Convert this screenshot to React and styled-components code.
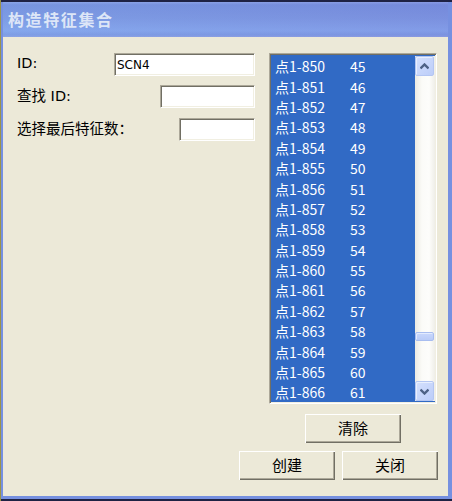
import React from "react";
import styled, { createGlobalStyle } from "styled-components";

const Global = createGlobalStyle`
  html, body { margin: 0; padding: 0; background: #23274a; }
  * { box-sizing: border-box; }
`;

const CJK = `"Noto Sans CJK SC", "Noto Sans", sans-serif`;

const rows = Array.from({ length: 17 }, (_, i) => ({
  name: `点1-${850 + i}`,
  value: 45 + i,
}));

export default function App() {
  return (
    <>
      <Global />
      <Frame>
        <Window>
          <TitleBar>构造特征集合</TitleBar>
          <Body>
            <TopArea>
              <Form>
                <FieldRow>
                  <Label>ID:</Label>
                  <Input $w={141} defaultValue="SCN4" />
                </FieldRow>
                <FieldRow $mt={9}>
                  <Label>查找 ID:</Label>
                  <Input $w={95} />
                </FieldRow>
                <FieldRow $mt={10}>
                  <Label>选择最后特征数：</Label>
                  <Input $w={76} />
                </FieldRow>
              </Form>
              <ListColumn>
                <ListBox>
                  <Items>
                    {rows.map((r) => (
                      <Item key={r.name}>
                        <Cell>{r.name}</Cell>
                        <Cell>{r.value}</Cell>
                      </Item>
                    ))}
                  </Items>
                  <ScrollBar>
                    <ScrollButton aria-label="up">
                      <svg width="9" height="7" viewBox="0 0 9 7">
                        <path d="M0.5 5.5 L4.5 1.5 L8.5 5.5" fill="none" stroke="#4d6185" strokeWidth="2.4" />
                      </svg>
                    </ScrollButton>
                    <Track>
                      <Thumb />
                    </Track>
                    <ScrollButton aria-label="down">
                      <svg width="9" height="7" viewBox="0 0 9 7">
                        <path d="M0.5 1.5 L4.5 5.5 L8.5 1.5" fill="none" stroke="#4d6185" strokeWidth="2.4" />
                      </svg>
                    </ScrollButton>
                  </ScrollBar>
                </ListBox>
                <ClearRow>
                  <Button>清除</Button>
                </ClearRow>
              </ListColumn>
            </TopArea>
            <ActionRow>
              <Button>创建</Button>
              <Button>关闭</Button>
            </ActionRow>
          </Body>
        </Window>
      </Frame>
    </>
  );
}

const Frame = styled.div`
  width: 452px;
  height: 501px;
  display: flex;
  padding: 2px 0 2px 0;
  border-left: 1px solid #9a944a;
  background: #1e2244;
`;

const Window = styled.div`
  flex: 1;
  display: flex;
  flex-direction: column;
  border-style: solid;
  border-color: #7690e0;
  border-width: 0 4px 3px 2px;
`;

const TitleBar = styled.div`
  height: 35px;
  padding: 0 0 2px 5px;
  display: flex;
  align-items: center;
  font-family: ${CJK};
  font-weight: 700;
  font-size: 16px;
  letter-spacing: 1.6px;
  color: #dde6f7;
  background:
    linear-gradient(90deg, rgba(130, 165, 235, 0.25), rgba(120, 120, 215, 0.25)),
    linear-gradient(180deg, #8ea6e6 0%, #7490dc 8%, #7b98e1 45%, #86a8ed 82%, #7c9be3 94%, #90a4e2 100%);
`;

const Body = styled.div`
  flex: 1;
  background: #ece9d8;
  padding: 16px 10px 0 14px;
  display: flex;
  flex-direction: column;
`;

const TopArea = styled.div`
  display: flex;
  gap: 14px;
`;

const Form = styled.div`
  width: 238px;
  display: flex;
  flex-direction: column;
`;

const FieldRow = styled.div`
  display: flex;
  align-items: center;
  justify-content: space-between;
  height: 23px;
  margin-top: ${(p) => p.$mt || 0}px;
`;

const Label = styled.span`
  font-family: "DejaVu Sans", "Noto Sans CJK SC", sans-serif;
  font-size: 14.5px;
  color: #000;
  padding-bottom: 4px;
`;

const Input = styled.input`
  width: ${(p) => p.$w}px;
  height: 23px;
  border-style: solid;
  border-width: 1px;
  border-color: #aca899 #fff #fff #aca899;
  box-shadow: inset 1px 1px #716f64, inset -1px -1px #f1efe2;
  background: #fff;
  padding: 1px 2px 0;
  font-family: "DejaVu Sans", sans-serif;
  font-size: 12px;
  color: #000;
  outline: none;
`;

const ListColumn = styled.div`
  width: 168px;
  display: flex;
  flex-direction: column;
`;

const ListBox = styled.div`
  height: 351px;
  display: flex;
  border-style: solid;
  border-width: 1px;
  border-color: #aca899 #fff #fff #aca899;
  box-shadow: inset 1px 1px #716f64, inset -1px -1px #f1efe2;
  padding: 2px;
  background: #316ac5;
`;

const Items = styled.div`
  flex: 1;
  overflow: hidden;
  padding-left: 3px;
`;

const Item = styled.div`
  height: 20.4px;
  display: grid;
  grid-template-columns: 75px 1fr;
  align-items: center;
  font-family: ${CJK};
  font-size: 14px;
  color: #fff;
`;

const Cell = styled.span`
  white-space: nowrap;
`;

const ScrollBar = styled.div`
  width: 20px;
  display: flex;
  flex-direction: column;
  background: linear-gradient(90deg, #eceae2 0%, #fbfbf8 35%, #fdfdfb 70%, #efeee8 100%);
  margin-right: -1px;
`;

const ScrollButton = styled.div`
  width: 19px;
  height: 20px;
  display: flex;
  align-items: center;
  justify-content: center;
  background: linear-gradient(135deg, #d4e0fd, #bccdf9);
  border: 1px solid #b4c6f2;
  border-radius: 2px;
  box-shadow: inset 1px 1px #e8effe;
`;

const Track = styled.div`
  flex: 1;
  display: flex;
  flex-direction: column;
  justify-content: flex-end;
  padding-bottom: 40px;
`;

const Thumb = styled.div`
  width: 19px;
  height: 9px;
  background: linear-gradient(180deg, #c9d7fc, #b9cbf7);
  border: 1px solid #a8bdf0;
  border-radius: 2px;
  box-shadow: inset 1px 1px #e3ebfe;
`;

const ClearRow = styled.div`
  display: flex;
  justify-content: center;
  margin-top: 10px;
`;

const ActionRow = styled.div`
  display: flex;
  justify-content: flex-end;
  gap: 7px;
  margin-top: 8px;
`;

const Button = styled.button`
  width: 96px;
  height: 29px;
  padding: 0 0 2px;
  border: none;
  background: #ece9d8;
  box-shadow: inset 1px 1px #fff, inset -1px -1px #716f64, inset -2px -2px #aca899;
  font-family: ${CJK};
  font-size: 15px;
  color: #000;
`;
